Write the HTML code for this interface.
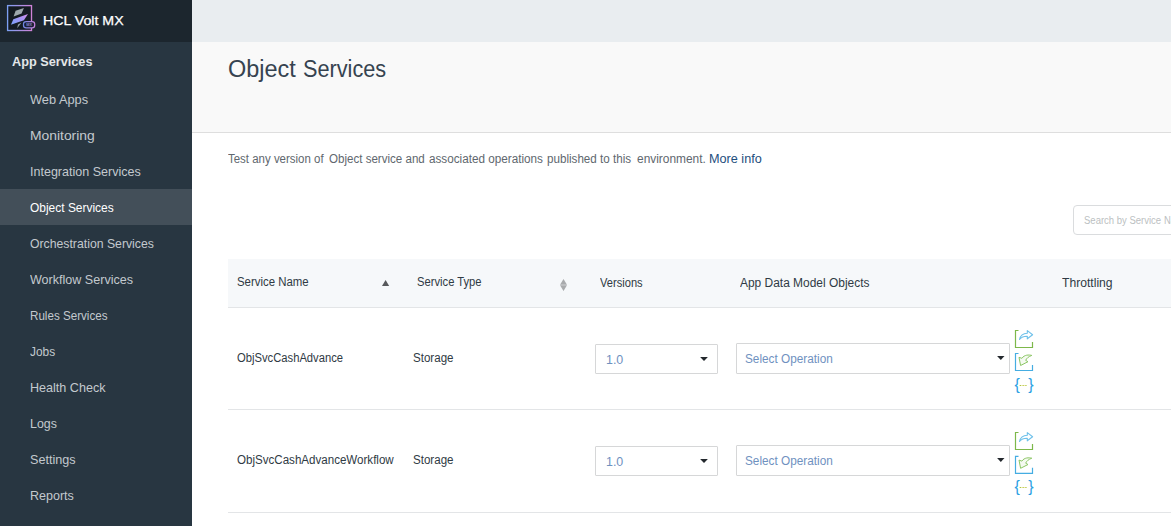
<!DOCTYPE html>
<html>
<head>
<meta charset="utf-8">
<title>Object Services</title>
<style>
html,body{margin:0;padding:0;}
body{width:1171px;height:526px;overflow:hidden;position:relative;background:#fff;font-family:"Liberation Sans",sans-serif;color:#2c3a46;}
.abs{position:absolute;}
.t{position:absolute;white-space:nowrap;line-height:20px;transform-origin:0 0;}
#side{left:0;top:0;width:192px;height:526px;background:#283641;}
#sidehead{left:0;top:0;width:192px;height:42px;background:#1c262e;}
#navsel{left:0;top:189px;width:192px;height:36px;background:#434f59;}
#topbar{left:192px;top:0;width:979px;height:42px;background:#e9edf0;}
#band{left:192px;top:42px;width:979px;height:90px;background:#f9f9f9;border-bottom:1px solid #dedede;}
#search{left:1073px;top:205px;width:120px;height:28px;border:1px solid #dadcde;border-radius:4px;background:#fff;}
#thead{left:228px;top:259px;width:943px;height:48px;background:#f6f8fa;border-bottom:1px solid #e3e5e7;}
.rowline{left:228px;width:943px;height:1px;background:#e3e5e7;}
.sel1{left:595px;width:121px;height:28px;border:1px solid #d6d7d8;border-radius:1px;background:#fff;}
.sel2{left:736px;width:272px;height:29px;border:1px solid #d6d7d8;border-radius:1px;background:#fff;}
.caret{position:absolute;width:9px;height:5px;}
</style>
</head>
<body>
<div id="side" class="abs"></div>
<div id="sidehead" class="abs"></div>
<div id="navsel" class="abs"></div>
<svg class="abs" style="left:6px;top:4px" width="32" height="30" viewBox="0 0 32 30">
  <defs>
    <linearGradient id="lg1" x1="0" y1="0" x2="1" y2="0"><stop offset="0" stop-color="#7c9ff2"/><stop offset="1" stop-color="#cf83d8"/></linearGradient>
    <linearGradient id="lg2" x1="0" y1="1" x2="1" y2="0"><stop offset="0.1" stop-color="#809ff8"/><stop offset="0.6" stop-color="#a693f3"/><stop offset="1" stop-color="#d68be6"/></linearGradient>
    <linearGradient id="lg3" x1="0" y1="0" x2="1" y2="0"><stop offset="0" stop-color="#6f86e0"/><stop offset="1" stop-color="#c983dc"/></linearGradient>
  </defs>
  <rect x="1.6" y="1.6" width="23.9" height="24.9" fill="#141b22" stroke="url(#lg1)" stroke-width="1.35"/>
  <path d="M9.6 6.8 L17.9 4.1 L15.6 9.6 L7.6 12.4 Z" fill="#9ea8ad"/>
  <path d="M7.3 15.3 L22 10 L17.9 16.2 L4.9 20.7 Z" fill="url(#lg2)"/>
  <path d="M12 20.6 L15.6 18.5 L11.2 24.2 Z" fill="#939ea4"/>
  <rect x="17.5" y="17.5" width="11.2" height="6.4" rx="2.6" fill="#1a1f36" stroke="url(#lg3)" stroke-width="1.25"/>
  <text x="23.1" y="22.1" font-family="Liberation Sans" font-size="3.9" font-weight="700" fill="#a8a2e6" fill-opacity="0.8" text-anchor="middle">MX</text>
</svg>

<div id="topbar" class="abs"></div>
<div id="band" class="abs"></div>
<div id="search" class="abs"></div>
<div id="thead" class="abs"></div>
<svg class="abs" style="left:380px;top:277px" width="12" height="12"><path d="M2 9 L5.6 2.9 L9.2 9 Z" fill="#57595c"/></svg>
<svg class="abs" style="left:558px;top:277px" width="12" height="16"><path d="M2 7.65 L5.5 2 L9 7.65 Z M2 8.35 L5.5 14 L9 8.35 Z" fill="#a9abad"/></svg>

<div class="abs rowline" style="top:409px"></div>
<div class="abs rowline" style="top:512px"></div>

<!-- row 1 -->
<div class="abs sel1" style="top:344px"><svg class="caret" style="left:104px;top:12.4px" viewBox="0 0 9 5"><path d="M0.1 0 H7.9 L4 4.1 Z" fill="#23282d"/></svg></div>
<div class="abs sel2" style="top:343px"><svg class="caret" style="left:259.6px;top:12.4px" viewBox="0 0 9 5"><path d="M0.1 0 H7.5 L3.8 4.1 Z" fill="#23282d"/></svg></div>
<!-- row 2 -->
<div class="abs sel1" style="top:446px"><svg class="caret" style="left:104px;top:12.4px" viewBox="0 0 9 5"><path d="M0.1 0 H7.9 L4 4.1 Z" fill="#23282d"/></svg></div>
<div class="abs sel2" style="top:445px"><svg class="caret" style="left:259.6px;top:12.4px" viewBox="0 0 9 5"><path d="M0.1 0 H7.5 L3.8 4.1 Z" fill="#23282d"/></svg></div>

<!-- icons -->
<svg class="abs" style="left:1012px;top:326px" width="26" height="50" viewBox="0 0 26 50">
  <g fill="none" stroke-linecap="butt" stroke-linejoin="miter">
    <path d="M6.5 4.5 H3.5 V21.5 H20.5 V16" stroke="#7db84a" stroke-width="1.2"/>
    <path d="M7.5 13.5 C8.5 9 11.5 7.3 15.3 7.2 V4.6 L20.6 8.8 L15.3 12.8 V10.3 C12 10.2 9.5 11 7.5 13.5 Z" stroke="#6fc1ea" stroke-width="1.1" stroke-linejoin="round"/>
    <g transform="translate(0,0)">
    <path d="M6.5 27.5 H3.5 V44.5 H20.5 V39" stroke="#45ade2" stroke-width="1.2"/>
    <path d="M19.8 29.4 C17 28.7 12.3 28.6 9.9 32.3 L7 31.3 L8.6 39.5 L16 35.7 L13.7 34.4 C14.5 32.3 16.6 30.6 19.8 29.4 Z" stroke="#8cc665" stroke-width="1" fill="#f4faf0" stroke-linejoin="round"/>
    </g>
  </g>
</svg>
<div class="t" style="left:1014.6px;top:375px;font-size:16px;color:#2c9fe3;">{</div>
<div class="t" style="left:1028.2px;top:375px;font-size:16px;color:#2c9fe3;">}</div>
<div class="abs" style="left:1019.3px;top:385.2px;width:7.6px;height:1.2px;background:#f5efb0;"></div>
<div class="abs" style="left:1019.9px;top:385.1px;width:1.5px;height:1.4px;background:#a9c24e;box-shadow:2.7px 0 0 #a9c24e,5.4px 0 0 #a9c24e;"></div>
<svg class="abs" style="left:1012px;top:428px" width="26" height="50" viewBox="0 0 26 50">
  <g fill="none" stroke-linecap="butt" stroke-linejoin="miter">
    <path d="M6.5 4.5 H3.5 V21.5 H20.5 V16" stroke="#7db84a" stroke-width="1.2"/>
    <path d="M7.5 13.5 C8.5 9 11.5 7.3 15.3 7.2 V4.6 L20.6 8.8 L15.3 12.8 V10.3 C12 10.2 9.5 11 7.5 13.5 Z" stroke="#6fc1ea" stroke-width="1.1" stroke-linejoin="round"/>
    <g transform="translate(0,0.8)">
    <path d="M6.5 27.5 H3.5 V44.5 H20.5 V39" stroke="#45ade2" stroke-width="1.2"/>
    <path d="M19.8 29.4 C17 28.7 12.3 28.6 9.9 32.3 L7 31.3 L8.6 39.5 L16 35.7 L13.7 34.4 C14.5 32.3 16.6 30.6 19.8 29.4 Z" stroke="#8cc665" stroke-width="1" fill="#f4faf0" stroke-linejoin="round"/>
    </g>
  </g>
</svg>
<div class="t" style="left:1014.6px;top:477px;font-size:16px;color:#2c9fe3;">{</div>
<div class="t" style="left:1028.2px;top:477px;font-size:16px;color:#2c9fe3;">}</div>
<div class="abs" style="left:1019.3px;top:487.2px;width:7.6px;height:1.2px;background:#f5efb0;"></div>
<div class="abs" style="left:1019.9px;top:487.1px;width:1.5px;height:1.4px;background:#a9c24e;box-shadow:2.7px 0 0 #a9c24e,5.4px 0 0 #a9c24e;"></div>
<div class="t" style="left:43px;top:11px;font-size:13px;font-weight:400;color:#ffffff;transform:scaleX(1.0904);-webkit-text-stroke:0.25px #fff;">HCL Volt MX</div>
<div class="t" style="left:12px;top:52px;font-size:13px;font-weight:700;color:#e3e6e8;transform:scaleX(0.9768);">App Services</div>
<div class="t" style="left:30px;top:90px;font-size:13px;font-weight:400;color:#c3c9ce;transform:scaleX(0.9847);">Web Apps</div>
<div class="t" style="left:30px;top:126px;font-size:13px;font-weight:400;color:#c3c9ce;transform:scaleX(1.0661);">Monitoring</div>
<div class="t" style="left:30px;top:162px;font-size:13px;font-weight:400;color:#c3c9ce;transform:scaleX(0.9640);">Integration Services</div>
<div class="t" style="left:30px;top:198px;font-size:13px;font-weight:400;color:#ffffff;transform:scaleX(0.9198);">Object Services</div>
<div class="t" style="left:30px;top:234px;font-size:13px;font-weight:400;color:#c3c9ce;transform:scaleX(0.9420);">Orchestration Services</div>
<div class="t" style="left:30px;top:270px;font-size:13px;font-weight:400;color:#c3c9ce;transform:scaleX(0.9654);">Workflow Services</div>
<div class="t" style="left:30px;top:306px;font-size:13px;font-weight:400;color:#c3c9ce;transform:scaleX(0.8942);">Rules Services</div>
<div class="t" style="left:30px;top:342px;font-size:13px;font-weight:400;color:#c3c9ce;transform:scaleX(0.9148);">Jobs</div>
<div class="t" style="left:30px;top:378px;font-size:13px;font-weight:400;color:#c3c9ce;transform:scaleX(0.9675);">Health Check</div>
<div class="t" style="left:30px;top:414px;font-size:13px;font-weight:400;color:#c3c9ce;transform:scaleX(0.9519);">Logs</div>
<div class="t" style="left:30px;top:450px;font-size:13px;font-weight:400;color:#c3c9ce;transform:scaleX(0.9696);">Settings</div>
<div class="t" style="left:30px;top:486px;font-size:13px;font-weight:400;color:#c3c9ce;transform:scaleX(0.9636);">Reports</div>
<div class="t" style="left:228px;top:59px;font-size:23.5px;font-weight:400;color:#364350;transform:scaleX(0.9985);">Object</div>
<div class="t" style="left:303px;top:59px;font-size:23.5px;font-weight:400;color:#364350;transform:scaleX(0.9225);">Services</div>
<div class="t" style="left:228px;top:149px;font-size:12px;font-weight:400;color:#60676e;transform:scaleX(0.9554);">Test any version of</div>
<div class="t" style="left:329px;top:149px;font-size:12px;font-weight:400;color:#60676e;transform:scaleX(0.9636);">Object service and</div>
<div class="t" style="left:429px;top:149px;font-size:12px;font-weight:400;color:#60676e;transform:scaleX(0.9761);">associated operations</div>
<div class="t" style="left:547px;top:149px;font-size:12px;font-weight:400;color:#60676e;transform:scaleX(0.9690);">published to this</div>
<div class="t" style="left:637px;top:149px;font-size:12px;font-weight:400;color:#60676e;transform:scaleX(0.9928);">environment.</div>
<div class="t" style="left:709px;top:149px;font-size:12px;font-weight:400;color:#1d4e7d;transform:scaleX(1.0551);">More info</div>
<div class="t" style="left:1084px;top:211px;font-size:10px;font-weight:400;color:#bcbfc2;transform:scaleX(0.9506);">Search by Service</div>
<div class="t" style="left:1164px;top:211px;font-size:10px;font-weight:400;color:#bcbfc2;transform:scaleX(0.9423);">Name</div>
<div class="t" style="left:237px;top:272px;font-size:12px;font-weight:400;color:#2f3a44;transform:scaleX(0.9514);">Service Name</div>
<div class="t" style="left:417px;top:272px;font-size:12px;font-weight:400;color:#2f3a44;transform:scaleX(0.9338);">Service Type</div>
<div class="t" style="left:600px;top:273px;font-size:12px;font-weight:400;color:#2f3a44;transform:scaleX(0.9261);">Versions</div>
<div class="t" style="left:740px;top:273px;font-size:12px;font-weight:400;color:#2f3a44;transform:scaleX(0.9954);">App Data Model Objects</div>
<div class="t" style="left:1062px;top:273px;font-size:12px;font-weight:400;color:#2f3a44;transform:scaleX(1.0120);">Throttling</div>
<div class="t" style="left:237px;top:348px;font-size:12px;font-weight:400;color:#2f3a44;transform:scaleX(0.9354);">ObjSvcCashAdvance</div>
<div class="t" style="left:413px;top:348px;font-size:12px;font-weight:400;color:#2f3a44;transform:scaleX(0.9634);">Storage</div>
<div class="t" style="left:606px;top:350px;font-size:12.5px;font-weight:400;color:#6f91bf;transform:scaleX(0.9937);">1.0</div>
<div class="t" style="left:745px;top:349px;font-size:12px;font-weight:400;color:#6f91bf;transform:scaleX(0.9818);">Select Operation</div>
<div class="t" style="left:237px;top:450px;font-size:12px;font-weight:400;color:#2f3a44;transform:scaleX(0.9644);">ObjSvcCashAdvanceWorkflow</div>
<div class="t" style="left:413px;top:450px;font-size:12px;font-weight:400;color:#2f3a44;transform:scaleX(0.9634);">Storage</div>
<div class="t" style="left:606px;top:452px;font-size:12.5px;font-weight:400;color:#6f91bf;transform:scaleX(0.9937);">1.0</div>
<div class="t" style="left:745px;top:451px;font-size:12px;font-weight:400;color:#6f91bf;transform:scaleX(0.9818);">Select Operation</div>
</body>
</html>
